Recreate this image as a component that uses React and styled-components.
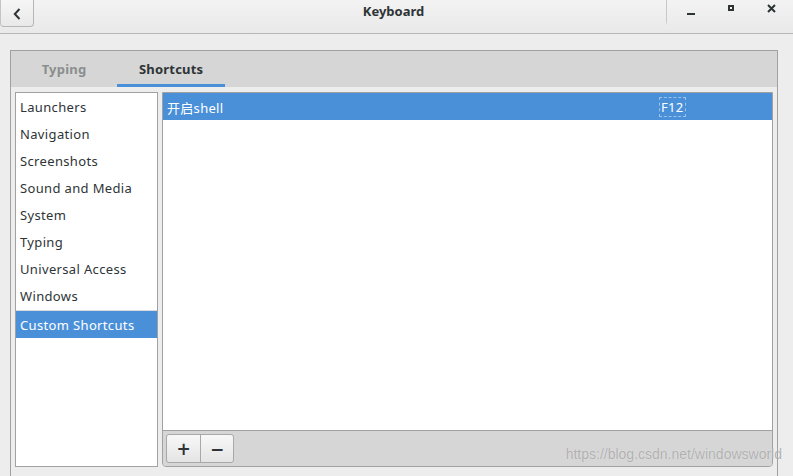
import React from "react";
import styled, { createGlobalStyle } from "styled-components";

const GlobalStyle = createGlobalStyle`
  * { box-sizing: border-box; }
  body {
    margin: 0;
    background: #ededed;
    font-family: "Noto Sans", "Noto Sans CJK SC", sans-serif;
    font-size: 13px;
    color: #2e3436;
  }
`;

const categories = [
  "Launchers",
  "Navigation",
  "Screenshots",
  "Sound and Media",
  "System",
  "Typing",
  "Universal Access",
  "Windows",
];

export default function App() {
  return (
    <>
      <GlobalStyle />
      <Window>
        <HeaderBar>
          <HeaderLeft>
            <BackButton>
              <svg width="8" height="12" viewBox="0 0 8 12">
                <path d="M6.5 1 L1.8 6 L6.5 11" fill="none" stroke="#2e3436" strokeWidth="2" />
              </svg>
            </BackButton>
          </HeaderLeft>
          <Title>Keyboard</Title>
          <HeaderRight>
            <Separator />
            <WinButton>
              <svg width="8" height="2" viewBox="0 0 8 2">
                <rect x="0" y="0" width="8" height="2" fill="#2e3436" />
              </svg>
            </WinButton>
            <WinButton $up>
              <svg width="6" height="6" viewBox="0 0 6 6">
                <rect x="1" y="1" width="4" height="4" fill="none" stroke="#2e3436" strokeWidth="2" />
              </svg>
            </WinButton>
            <WinButton $up>
              <svg width="9" height="9" viewBox="0 0 9 9">
                <path d="M1 1 L8 8 M8 1 L1 8" stroke="#2e3436" strokeWidth="2" />
              </svg>
            </WinButton>
          </HeaderRight>
        </HeaderBar>

        <Body>
          <Notebook>
            <TabBar>
              <Tab>Typing</Tab>
              <Tab $active>Shortcuts</Tab>
            </TabBar>
            <Page>
              <CategoryList>
                {categories.map((c, i) => (
                  <CategoryRow key={c} $last={i === categories.length - 1}>
                    {c}
                  </CategoryRow>
                ))}
                <CategoryRow $selected>Custom Shortcuts</CategoryRow>
              </CategoryList>
              <ShortcutPanel>
                <ShortcutList>
                  <ShortcutRow $selected>
                    <span>开启shell</span>
                    <Accel>F12</Accel>
                  </ShortcutRow>
                </ShortcutList>
                <Toolbar>
                  <ButtonGroup>
                    <ToolButton>+</ToolButton>
                    <ToolButton>−</ToolButton>
                  </ButtonGroup>
                </Toolbar>
              </ShortcutPanel>
            </Page>
          </Notebook>
        </Body>
        <Watermark>https://blog.csdn.net/windowsworld</Watermark>
      </Window>
    </>
  );
}

const Window = styled.div`
  position: relative;
  width: 793px;
  height: 476px;
  overflow: hidden;
  display: flex;
  flex-direction: column;
  background: #ededed;
`;

const HeaderBar = styled.header`
  height: 34px;
  flex: none;
  display: grid;
  grid-template-columns: 1fr auto 1fr;
  align-items: start;
  background: linear-gradient(#f3f3f3, #e9e9e9);
  border-bottom: 1px solid #b6b6b6;
`;

const HeaderLeft = styled.div`
  display: flex;
`;

const BackButton = styled.div`
  width: 34px;
  height: 27px;
  display: flex;
  align-items: center;
  justify-content: center;
  padding-top: 1px;
  border: 1px solid #b6b6b6;
  border-top: none;
  border-left-color: #c4c4c4;
  border-radius: 0 0 4px 4px;
  background: linear-gradient(#f6f6f6, #e9e9e9);
`;

const Title = styled.div`
  font-weight: bold;
  line-height: 23px;
  padding-right: 6px;
`;

const HeaderRight = styled.div`
  display: flex;
  justify-content: flex-end;
  padding-right: 2px;
`;

const Separator = styled.div`
  width: 1px;
  height: 26px;
  margin-right: 4px;
  background: linear-gradient(#c8c8c8, #c8c8c8 80%, rgba(200, 200, 200, 0));
`;

const WinButton = styled.div`
  width: 40px;
  height: 26px;
  display: flex;
  align-items: center;
  justify-content: center;
  padding-top: ${(p) => (p.$up ? "0" : "2px")};
  margin-top: ${(p) => (p.$up ? "-5px" : "0")};
`;

const Body = styled.div`
  flex: 1;
  padding: 16px 15px 0 10px;
`;

const Notebook = styled.div`
  border: 1px solid #a1a1a1;
  border-bottom: none;
  height: 460px;
  display: flex;
  flex-direction: column;
`;

const TabBar = styled.div`
  height: 36px;
  display: flex;
  background: #d6d6d6;
`;

const Tab = styled.div`
  min-width: 106px;
  padding: 3px 22px 0;
  display: flex;
  align-items: center;
  justify-content: center;
  font-weight: bold;
  letter-spacing: 0.2px;
  color: ${(p) => (p.$active ? "#2e3436" : "#8b8e8f")};
  border-bottom: 3px solid ${(p) => (p.$active ? "#4a90d9" : "transparent")};
`;

const Page = styled.div`
  display: flex;
  gap: 4px;
  padding: 5px 4px 0 4px;
  background: #ededed;
`;

const CategoryList = styled.div`
  width: 143px;
  height: 375px;
  flex: none;
  background: #fff;
  border: 1px solid #a1a1a1;
`;

const CategoryRow = styled.div`
  height: ${(p) => (p.$last ? "29px" : "27px")};
  line-height: 29px;
  padding: 0 4px;
  white-space: nowrap;
  letter-spacing: 0.35px;
  background: ${(p) => (p.$selected ? "#4a90d9" : "transparent")};
  color: ${(p) => (p.$selected ? "#fff" : "#2e3436")};
  border-bottom: ${(p) => (p.$last ? "1px solid #dcdcdc" : "none")};
`;

const ShortcutPanel = styled.div`
  flex: 1;
  height: 375px;
  display: flex;
  flex-direction: column;
  border: 1px solid #a1a1a1;
  border-radius: 0 0 4px 4px;
  overflow: hidden;
`;

const ShortcutList = styled.div`
  flex: 1;
  background: #fff;
`;

const ShortcutRow = styled.div`
  height: 27px;
  display: grid;
  grid-template-columns: 1fr 112px;
  align-items: center;
  padding: 1px 0 0 4px;
  letter-spacing: 0.3px;
  background: ${(p) => (p.$selected ? "#4a90d9" : "transparent")};
  color: ${(p) => (p.$selected ? "#fff" : "#2e3436")};
`;

const Accel = styled.span`
  justify-self: start;
  padding: 0 1px;
  line-height: 18px;
  outline: 1px dashed rgba(255, 255, 255, 0.45);
`;

const Toolbar = styled.div`
  height: 36px;
  flex: none;
  border-top: 1px solid #a1a1a1;
  background: #d6d6d6;
  padding: 3px 0 0 3px;
`;

const ButtonGroup = styled.div`
  display: inline-flex;
  border: 1px solid #a8a8a8;
  border-radius: 3px;
  overflow: hidden;
  background: linear-gradient(#f8f8f8, #e4e4e4);
`;

const ToolButton = styled.div`
  width: 33px;
  height: 27px;
  display: flex;
  align-items: center;
  justify-content: center;
  font-family: "DejaVu Sans", sans-serif;
  font-size: 17px;
  font-weight: bold;
  color: #2e3436;
  & + & {
    border-left: 1px solid #a8a8a8;
  }
`;

const Watermark = styled.div`
  position: absolute;
  right: 11px;
  bottom: 14px;
  font-family: "Liberation Sans", Arial, sans-serif;
  font-size: 14px;
  color: rgba(165, 165, 165, 0.85);
  text-shadow: 0 0 1px rgba(255, 255, 255, 0.6);
  pointer-events: none;
`;
